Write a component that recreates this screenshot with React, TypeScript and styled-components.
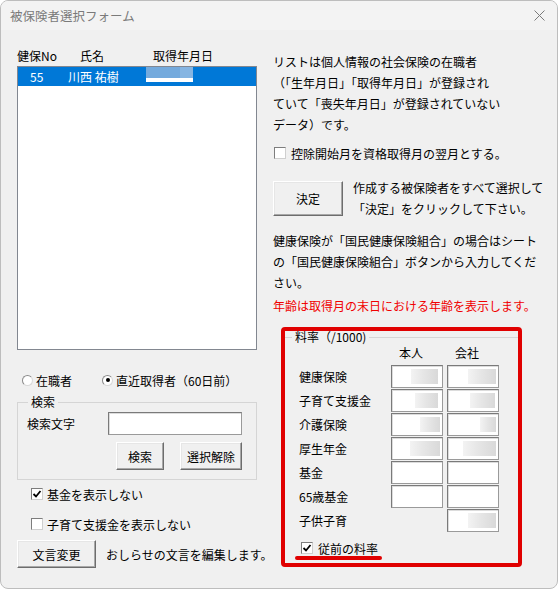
import React from "react";
import styled, { createGlobalStyle } from "styled-components";

const GlobalStyle = createGlobalStyle`
  html, body {
    margin: 0;
    padding: 0;
    background: #ffffff;
  }
  body {
    font-family: "Noto Sans CJK JP", "Noto Sans", sans-serif;
    font-size: 12px;
    color: #000;
  }
  * {
    box-sizing: border-box;
  }
`;

const Window = styled.div`
  width: 558px;
  height: 589px;
  background: #f0f0f0;
  border: 1px solid #bdbdbd;
  border-radius: 8px;
  overflow: hidden;
  display: flex;
  flex-direction: column;
`;

const TitleBar = styled.div`
  height: 29px;
  flex-shrink: 0;
  display: flex;
  align-items: center;
  justify-content: space-between;
  padding: 0 12px 0 9px;
  background: #f3f3f3;
  color: #7a7a7a;
  font-size: 12.5px;
`;

const Body = styled.div`
  display: flex;
  padding: 16px 0 0 16px;
`;

const LeftColumn = styled.div`
  width: 240px;
  display: flex;
  flex-direction: column;
`;

const RightColumn = styled.div`
  margin-left: 16px;
  display: flex;
  flex-direction: column;
`;

/* ---- list ---- */

const ListHeader = styled.div`
  display: grid;
  grid-template-columns: 63px 73px 1fr;
  height: 20px;
  line-height: 20px;
`;

const ListBox = styled.div`
  height: 284px;
  background: #fff;
  border: 1px solid #828790;
`;

const SelectedRow = styled.div`
  height: 19px;
  display: grid;
  grid-template-columns: 38px 78px 1fr;
  align-items: center;
  padding-left: 12px;
  background: #0078d7;
  color: #fff;
  line-height: 19px;
`;

const DatePatch = styled.div`
  align-self: start;
  width: 47px;
  height: 15px;
  background:
    linear-gradient(to bottom, transparent 0 11px, #ffffff 11px 15px),
    linear-gradient(to right, #74aadd 0 34px, #86b5e2 34px 47px);
`;

/* ---- radios / checks ---- */

const OptionRow = styled.div<{ $mt: number; $ml?: number; $gap?: number }>`
  display: flex;
  align-items: center;
  height: 16px;
  margin-top: ${(p) => p.$mt}px;
  margin-left: ${(p) => p.$ml ?? 0}px;
  gap: ${(p) => p.$gap ?? 30}px;
  white-space: nowrap;
`;

const Option = styled.label<{ $gap?: number }>`
  display: flex;
  align-items: center;
  gap: ${(p) => p.$gap ?? 3}px;
`;

const RadioDot = styled.span<{ $on?: boolean }>`
  width: 11px;
  height: 11px;
  border-radius: 50%;
  background: #fff;
  border: 1px solid #8a8a8a;
  border-right-color: #d8d8d8;
  border-bottom-color: #d8d8d8;
  display: flex;
  align-items: center;
  justify-content: center;
  &::after {
    content: "";
    width: 4px;
    height: 4px;
    border-radius: 50%;
    background: ${(p) => (p.$on ? "#000" : "transparent")};
  }
`;

const CheckSquare = styled.span`
  width: 12px;
  height: 12px;
  background: #fff;
  border: 1px solid #7d7d7d;
  border-right-color: #cfcfcf;
  border-bottom-color: #cfcfcf;
  display: flex;
  align-items: center;
  justify-content: center;
`;

const CheckBox = ({ checked }: { checked?: boolean }) => (
  <CheckSquare>
    {checked && (
      <svg width="10" height="10" viewBox="0 0 10 10">
        <polyline points="1.5,5 4,7.5 8.5,2" fill="none" stroke="#000" strokeWidth="1.8" />
      </svg>
    )}
  </CheckSquare>
);

/* ---- group boxes ---- */

const SearchGroup = styled.fieldset`
  margin: 7px 0 0 0;
  padding: 0 0 9px 9px;
  border: 1px solid #d5d5d5;
  min-width: 0;
`;

const GroupLegend = styled.legend`
  margin-left: 1px;
  padding: 0 3px;
  line-height: 14px;
`;

const SearchRow = styled.div`
  display: flex;
  align-items: center;
  height: 23px;
  margin-top: 3px;
`;

const SearchLabel = styled.span`
  width: 81px;
`;

const TextInput = styled.div<{ $w: number; $h?: number }>`
  width: ${(p) => p.$w}px;
  height: ${(p) => p.$h ?? 23}px;
  background: #fff;
  border: 1px solid #9a9a9a;
  border-top-color: #7a7a7a;
  border-left-color: #7a7a7a;
  box-shadow: inset 1px 1px 0 #dcdcdc;
  display: flex;
  justify-content: flex-end;
  padding: 3px 2px 3px 0;
`;

const ButtonRow = styled.div`
  display: flex;
  justify-content: flex-end;
  gap: 16px;
  margin-top: 7px;
  padding-right: 14px;
`;

const Button = styled.button<{ $w: number; $h: number }>`
  width: ${(p) => p.$w}px;
  height: ${(p) => p.$h}px;
  padding: 0;
  font: inherit;
  color: #000;
  background: #f0f0f0;
  border: 1px solid;
  border-color: #ffffff #6d6d6d #6d6d6d #ffffff;
  box-shadow: inset -1px -1px 0 #a8a8a8, inset 1px 1px 0 #e6e6e6;
  flex-shrink: 0;
`;

const NoticeRow = styled.div`
  display: flex;
  align-items: center;
  gap: 10px;
  margin-top: 8px;
  white-space: nowrap;
`;

/* ---- right side text ---- */

const Para = styled.p<{ $mt: number; $red?: boolean }>`
  margin: ${(p) => p.$mt}px 0 0 0;
  line-height: 21px;
  white-space: nowrap;
  color: ${(p) => (p.$red ? "#f00000" : "#000")};
`;

const DecideRow = styled.div`
  display: flex;
  align-items: center;
  gap: 10px;
  height: 42px;
  margin-top: 16px;
`;

/* ---- rates ---- */

const HighlightFrame = styled.div`
  margin: 11px 0 0 8px;
  width: 241px;
  height: 240px;
  border: 4px solid #e00000;
  border-radius: 4px;
`;

const RateGroup = styled.fieldset`
  margin: 0;
  padding: 0 0 0 7px;
  border: none;
  border-top: 1px solid #d5d5d5;
  min-width: 0;
`;

const RateLegend = styled.legend`
  padding: 0 3px;
  line-height: 12px;
`;

const RateHead = styled.div`
  display: grid;
  grid-template-columns: 88px 52px 52px;
  column-gap: 4px;
  height: 16px;
  line-height: 16px;
  margin: 2px 0 0 7px;
  & > span {
    padding-left: 8px;
  }
`;

const RateGrid = styled.div`
  display: grid;
  grid-template-columns: 88px 52px 52px;
  grid-auto-rows: 23px;
  column-gap: 4px;
  row-gap: 1px;
  margin: 4px 0 0 7px;
  align-items: center;
`;

const Blur = styled.div<{ $w: number; $r: number }>`
  width: ${(p) => p.$w}px;
  margin-right: ${(p) => p.$r}px;
  background: linear-gradient(to right, #f3f3f3, #e6e6e6 45%, #d9d9d9);
  filter: blur(0.6px);
`;

const Underline = styled.div`
  width: 87px;
  height: 4px;
  margin-left: 3px;
  border-radius: 2px;
  background: #e00000;
`;

type Cell = { w: number; r: number } | null | "none";

const rateRows: { label: string; own: Cell; company: Cell }[] = [
  { label: "健康保険", own: { w: 27, r: 2 }, company: { w: 28, r: 0 } },
  { label: "子育て支援金", own: { w: 23, r: 2 }, company: { w: 25, r: 1 } },
  { label: "介護保険", own: { w: 20, r: 0 }, company: { w: 16, r: 0 } },
  { label: "厚生年金", own: { w: 30, r: 0 }, company: { w: 33, r: 0 } },
  { label: "基金", own: null, company: null },
  { label: "65歳基金", own: null, company: null },
  { label: "子供子育", own: "none", company: { w: 28, r: 0 } },
];

const RateCell = ({ cell }: { cell: Cell }) => {
  if (cell === "none") return <span />;
  return <TextInput $w={52}>{cell && <Blur $w={cell.w} $r={cell.r} />}</TextInput>;
};

const CloseIcon = () => (
  <svg width="11" height="11" viewBox="0 0 11 11">
    <path d="M0.5 0.5 L10.5 10.5 M10.5 0.5 L0.5 10.5" stroke="#7a7a7a" strokeWidth="1" />
  </svg>
);

export default function App() {
  return (
    <>
      <GlobalStyle />
      <Window>
        <TitleBar>
          <span>被保険者選択フォーム</span>
          <CloseIcon />
        </TitleBar>
        <Body>
          <LeftColumn>
            <ListHeader>
              <span>健保No</span>
              <span>氏名</span>
              <span>取得年月日</span>
            </ListHeader>
            <ListBox>
              <SelectedRow>
                <span>55</span>
                <span>川西 祐樹</span>
                <DatePatch />
              </SelectedRow>
            </ListBox>

            <OptionRow $mt={22} $ml={5}>
              <Option>
                <RadioDot />
                在職者
              </Option>
              <Option>
                <RadioDot $on />
                直近取得者（60日前）
              </Option>
            </OptionRow>

            <SearchGroup>
              <GroupLegend>検索</GroupLegend>
              <SearchRow>
                <SearchLabel>検索文字</SearchLabel>
                <TextInput $w={134} />
              </SearchRow>
              <ButtonRow>
                <Button $w={48} $h={28}>検索</Button>
                <Button $w={62} $h={28}>選択解除</Button>
              </ButtonRow>
            </SearchGroup>

            <OptionRow $mt={6} $ml={14}>
              <Option $gap={4}>
                <CheckBox checked />
                基金を表示しない
              </Option>
            </OptionRow>
            <OptionRow $mt={14} $ml={14}>
              <Option $gap={4}>
                <CheckBox />
                子育て支援金を表示しない
              </Option>
            </OptionRow>

            <NoticeRow>
              <Button $w={79} $h={28}>文言変更</Button>
              <span>おしらせの文言を編集します。</span>
            </NoticeRow>
          </LeftColumn>

          <RightColumn>
            <Para $mt={5}>
              リストは個人情報の社会保険の在職者
              <br />
              （「生年月日」「取得年月日」が登録され
              <br />
              ていて「喪失年月日」が登録されていない
              <br />
              データ）です。
            </Para>

            <OptionRow $mt={10} $ml={1}>
              <Option $gap={5}>
                <CheckBox />
                控除開始月を資格取得月の翌月とする。
              </Option>
            </OptionRow>

            <DecideRow>
              <Button $w={70} $h={35}>決定</Button>
              <Para $mt={0}>
                作成する被保険者をすべて選択して
                <br />
                「決定」をクリックして下さい。
              </Para>
            </DecideRow>

            <Para $mt={11}>
              健康保険が「国民健康保険組合」の場合はシート
              <br />
              の「国民健康保険組合」ボタンから入力してくだ
              <br />
              さい。
            </Para>

            <Para $mt={2} $red>
              年齢は取得月の末日における年齢を表示します。
            </Para>

            <HighlightFrame>
              <RateGroup>
                <RateLegend>料率（/1000)</RateLegend>
                <RateHead>
                  <span />
                  <span>本人</span>
                  <span>会社</span>
                </RateHead>
                <RateGrid>
                  {rateRows.map((row) => (
                    <React.Fragment key={row.label}>
                      <span>{row.label}</span>
                      <RateCell cell={row.own} />
                      <RateCell cell={row.company} />
                    </React.Fragment>
                  ))}
                </RateGrid>
                <OptionRow $mt={8} $ml={9}>
                  <Option $gap={5}>
                    <CheckBox checked />
                    従前の料率
                  </Option>
                </OptionRow>
                <Underline />
              </RateGroup>
            </HighlightFrame>
          </RightColumn>
        </Body>
      </Window>
    </>
  );
}
